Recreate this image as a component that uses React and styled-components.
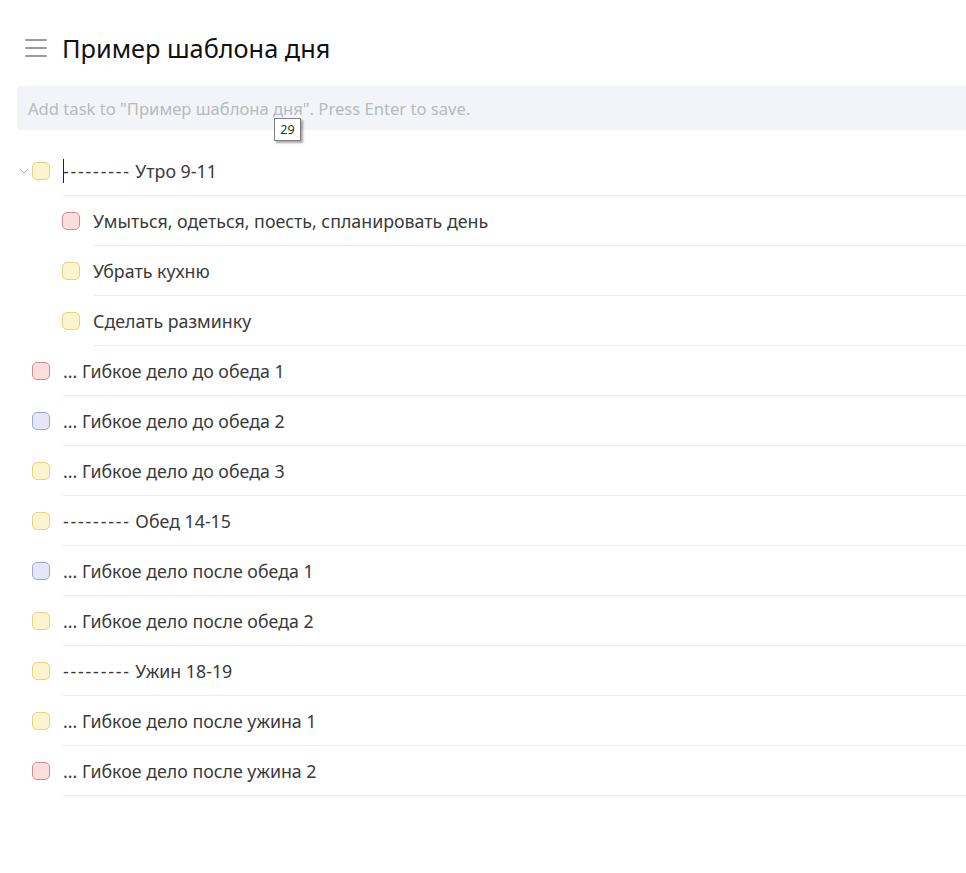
import React from 'react';
import styled, { createGlobalStyle } from 'styled-components';

const GlobalStyle = createGlobalStyle`
  html, body {
    margin: 0;
    padding: 0;
    background: #ffffff;
    font-family: "Noto Sans", "Open Sans", sans-serif;
  }
`;

const Page = styled.div`
  width: 966px;
  min-height: 873px;
  background: #fff;
`;

const Header = styled.div`
  display: flex;
  align-items: center;
  gap: 15px;
  padding: 28px 0 0 25px;
  height: 40px;
`;

const Burger = styled.div`
  display: flex;
  flex-direction: column;
  gap: 6px;
  width: 22px;
  span {
    height: 2px;
    background: #9c9c9c;
    border-radius: 1px;
  }
`;

const Title = styled.h1`
  margin: 0;
  font-size: 25.3px;
  font-weight: 400;
  color: #111;
`;

const InputWrap = styled.div`
  position: relative;
  margin: 18px 0 0 17px;
`;

const AddInput = styled.div`
  height: 44px;
  display: flex;
  align-items: center;
  padding-left: 11px;
  background: #f3f4f9;
  border-radius: 4px 0 0 4px;
  font-size: 16.6px;
  color: #b9b9c0;
`;

const Tooltip = styled.div`
  position: absolute;
  left: 257px;
  top: 32px;
  width: 25px;
  height: 21px;
  display: flex;
  align-items: center;
  justify-content: center;
  background: #fff;
  border: 1px solid #808080;
  box-shadow: 2px 2px 2px rgba(0, 0, 0, 0.35);
  font-size: 12.5px;
  color: #333;
`;

const List = styled.div`
  margin-top: 16px;
`;

const Row = styled.div`
  display: flex;
  align-items: center;
  height: 50px;
  padding-left: ${({ $level }) => ($level ? 63 : 33)}px;
  position: relative;
`;

const Chevron = styled.svg`
  position: absolute;
  left: 19px;
  top: 22px;
`;

const Check = styled.div`
  flex: none;
  box-sizing: border-box;
  width: 18px;
  height: 18px;
  border-radius: 5px;
  margin-left: -1px;
  margin-right: 13px;
  background: ${({ $c }) => palette[$c].bg};
  border: 1.5px solid ${({ $c }) => palette[$c].border};
`;

const Body = styled.div`
  flex: 1;
  align-self: stretch;
  display: flex;
  align-items: center;
  border-bottom: 1px solid #ebebeb;
`;

const Label = styled.span`
  font-size: 17.8px;
  color: #3a3a3a;
  white-space: nowrap;
  position: relative;
`;

const Dashes = styled.span`
  letter-spacing: 1.8px;
`;

const Caret = styled.span`
  position: absolute;
  left: 0;
  top: 0;
  bottom: 0;
  width: 1px;
  background: #222;
`;

const palette = {
  y: { bg: '#fdf4cf', border: '#e8d27c' },
  r: { bg: '#fddede', border: '#d88a90' },
  b: { bg: '#e5e7f8', border: '#a0a6d6' },
};

const tasks = [
  { t: 'Утро 9-11', dash: true, c: 'y', level: 0, open: true, caret: true },
  { t: 'Умыться, одеться, поесть, спланировать день', c: 'r', level: 1 },
  { t: 'Убрать кухню', c: 'y', level: 1 },
  { t: 'Сделать разминку', c: 'y', level: 1 },
  { t: '... Гибкое дело до обеда 1', c: 'r', level: 0 },
  { t: '... Гибкое дело до обеда 2', c: 'b', level: 0 },
  { t: '... Гибкое дело до обеда 3', c: 'y', level: 0 },
  { t: 'Обед 14-15', dash: true, c: 'y', level: 0 },
  { t: '... Гибкое дело после обеда 1', c: 'b', level: 0 },
  { t: '... Гибкое дело после обеда 2', c: 'y', level: 0 },
  { t: 'Ужин 18-19', dash: true, c: 'y', level: 0 },
  { t: '... Гибкое дело после ужина 1', c: 'y', level: 0 },
  { t: '... Гибкое дело после ужина 2', c: 'r', level: 0 },
];

export default function App() {
  return (
    <Page>
      <GlobalStyle />
      <Header>
        <Burger>
          <span />
          <span />
          <span />
        </Burger>
        <Title>Пример шаблона дня</Title>
      </Header>
      <InputWrap>
        <AddInput>Add task to "Пример шаблона дня". Press Enter to save.</AddInput>
        <Tooltip>29</Tooltip>
      </InputWrap>
      <List>
        {tasks.map((task, i) => (
          <Row key={i} $level={task.level}>
            {task.open && (
              <Chevron width="10" height="6" viewBox="0 0 10 6">
                <path d="M1 1l4 4 4-4" fill="none" stroke="#b5b5b5" strokeWidth="1" />
              </Chevron>
            )}
            <Check $c={task.c} />
            <Body>
              <Label>
                {task.caret && <Caret />}
                {task.dash && <Dashes>---------</Dashes>}
                {task.dash ? ' ' : ''}
                {task.t}
              </Label>
            </Body>
          </Row>
        ))}
      </List>
    </Page>
  );
}
